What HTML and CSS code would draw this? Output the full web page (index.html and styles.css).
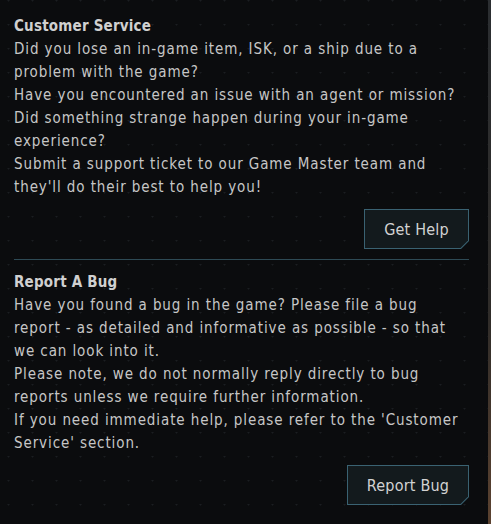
FILE: index.html
```html
<!DOCTYPE html>
<html>
<head>
<meta charset="utf-8">
<link rel="stylesheet" href="styles.css">
</head>
<body>
<div class="page">
  <main class="panel">
    <section class="block">
      <h2 class="title">Customer Service</h2>
      <p class="text">Did you lose an in-game item, ISK, or a ship due to a problem with the game?<br>Have you encountered an issue with an agent or mission?<br>Did something strange happen during your in-game experience?<br>Submit a support ticket to our Game Master team and they'll do their best to help you!</p>
      <div class="actions"><button class="btn btn-help"><span>Get Help</span></button></div>
    </section>
    <div class="sep"></div>
    <section class="block">
      <h2 class="title">Report A Bug</h2>
      <p class="text">Have you found a bug in the game? Please file a bug report - as detailed and informative as possible - so that we can look into it.<br>Please note, we do not normally reply directly to bug reports unless we require further information.<br>If you need immediate help, please refer to the 'Customer Service' section.</p>
      <div class="actions"><button class="btn btn-bug"><span>Report Bug</span></button></div>
    </section>
  </main>
  <div class="edge"></div>
</div>
</body>
</html>
```
FILE: styles.css
```css
html, body {
  margin: 0;
  padding: 0;
  height: 100%;
}
body {
  background-color: #0b0c0e;
  background-image: radial-gradient(circle at 8.5px 0.5px, #1b1e21 0.8px, transparent 1.2px);
  background-size: 24px 24px;
  color: #c6c6c6;
  font-family: "DejaVu Sans Condensed", "DejaVu Sans", sans-serif;
  font-size: 15px;
  line-height: 23px;
  letter-spacing: 0.9px;
}
.page {
  display: flex;
  height: 100%;
}
.panel {
  width: 455px;
  padding: 15px 0 0 14px;
}
.block {
  display: flex;
  flex-direction: column;
}
.title {
  margin: 0;
  font-size: 15px;
  font-weight: bold;
  line-height: 23px;
  letter-spacing: 0.2px;
  color: #d0d0d0;
}
.text {
  margin: 0;
}
.actions {
  display: flex;
  justify-content: flex-end;
  margin-top: 10px;
}
.btn {
  position: relative;
  height: 40px;
  border: none;
  padding: 0;
  background: #3a6272;
  clip-path: polygon(0 0, 100% 0, 100% calc(100% - 8px), calc(100% - 8px) 100%, 0 100%);
  font-family: inherit;
  font-size: 16px;
  letter-spacing: 0.2px;
  color: #d2d2d2;
  cursor: pointer;
}
.btn::before {
  content: "";
  position: absolute;
  inset: 1px;
  background: #131a1d;
  clip-path: polygon(0 0, 100% 0, 100% calc(100% - 7.5px), calc(100% - 7.5px) 100%, 0 100%);
}
.btn span {
  position: relative;
}
.btn-help {
  width: 105px;
}
.btn-bug {
  width: 122px;
}
.sep {
  height: 1px;
  background: #2e4a55;
  margin: 10px 0 11px 0;
}
.edge {
  margin-left: auto;
  width: 3px;
  background: linear-gradient(to bottom, #2b2e31 0%, #2f2c29 60%, #5b4230 100%);
}
```
